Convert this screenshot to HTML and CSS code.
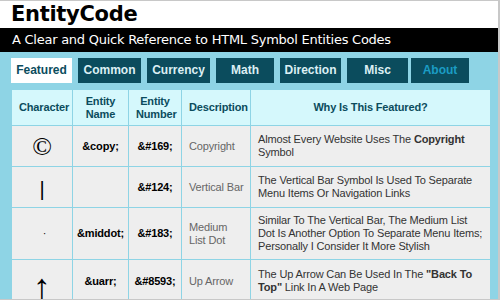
FILE: index.html
```html
<!DOCTYPE html>
<html lang="en">

<head>
    <meta charset="UTF-8">
    <title>EntityCode</title>
    <link rel="stylesheet" href="styles.css">
</head>

<body>

    <div id="page">
        <div id="masthead">
            <h1>EntityCode</h1>
        </div>
        <div id="tagline">A Clear and Quick Reference to HTML Symbol Entities Codes</div>

        <div id="main">
            <ul class="tabs">
                <li class="tab active">Featured</li>
                <li class="tab wide">Common</li>
                <li class="tab wide">Currency</li>
                <li class="tab narrow">Math</li>
                <li class="tab">Direction</li>
                <li class="tab">Misc</li>
                <li class="tab narrow about">About</li>
            </ul>

            <table class="entities">
                <tr>
                    <th class="col_char">Character</th>
                    <th class="col_name">Entity Name</th>
                    <th class="col_num">Entity Number</th>
                    <th class="col_desc">Description</th>
                    <th>Why Is This Featured?</th>
                </tr>
                <tr class="row_short">
                    <td class="glyph copy">&copy;</td>
                    <td class="code">&amp;copy;</td>
                    <td class="code">&amp;#169;</td>
                    <td class="desc">Copyright</td>
                    <td class="why">Almost Every Website Uses The <b>Copyright</b> Symbol</td>
                </tr>
                <tr class="row_short">
                    <td class="glyph bar">|</td>
                    <td class="code"></td>
                    <td class="code">&amp;#124;</td>
                    <td class="desc">Vertical Bar</td>
                    <td class="why">The Vertical Bar Symbol Is Used To Separate Menu Items Or Navigation Links</td>
                </tr>
                <tr>
                    <td class="glyph dot">&middot;</td>
                    <td class="code">&amp;middot;</td>
                    <td class="code">&amp;#183;</td>
                    <td class="desc">Medium<br>List Dot</td>
                    <td class="why">Similar To The Vertical Bar, The Medium List Dot Is Another Option To Separate Menu Items; Personally I Consider It More Stylish</td>
                </tr>
                <tr class="row_short">
                    <td class="glyph arrow">&uarr;</td>
                    <td class="code">&amp;uarr;</td>
                    <td class="code">&amp;#8593;</td>
                    <td class="desc">Up Arrow</td>
                    <td class="why">The Up Arrow Can Be Used In The <b>"Back To Top"</b> Link In A Web Page</td>
                </tr>
            </table>
        </div>
    </div>

</body>

</html>
```

FILE: styles.css
```css
*{
    box-sizing: border-box;
}

body{
    margin: 0;
    background-color: white;
}

#page{
    width: 500px;
    height: 300px;
    overflow: hidden;
    border-top: 1px solid #c8c8c8;
    border-right: 2px solid #c8c8c8;
    border-bottom: 1px solid #c8c8c8;
}

#masthead{
    height: 27px;
    padding-left: 11px;
}

h1{
    margin: 0;
    font-family: "DejaVu Sans", sans-serif;
    font-size: 21px;
    line-height: 26px;
    font-weight: bold;
    letter-spacing: -0.3px;
    color: black;
}

#tagline{
    height: 24px;
    background-color: black;
    color: white;
    font-family: "DejaVu Sans", sans-serif;
    font-size: 13px;
    line-height: 24px;
    letter-spacing: -0.25px;
    padding-left: 12px;
}

#main{
    background-color: #8ed4e5;
    height: 250px;
    padding: 6px 6px 0 11px;
}

.tabs{
    display: flex;
    gap: 6px;
    margin: 0;
    padding: 0;
    list-style: none;
}

.tab{
    width: 61px;
    height: 25px;
    background-color: #0b4c5d;
    color: #dcefF4;
    font-family: "Liberation Sans", Arial, sans-serif;
    font-size: 12px;
    font-weight: bold;
    line-height: 25px;
    text-align: center;
}

.tab.wide{
    width: 63px;
}

.tab.narrow{
    width: 58px;
}

.tab.active{
    background-color: white;
    color: #0b4c5d;
}

.tab.about{
    color: #1b9cc4;
    margin-left: -3px;
}

.entities{
    margin-top: 6px;
    width: 480px;
    border-collapse: collapse;
    table-layout: fixed;
    font-family: "Liberation Sans", Arial, sans-serif;
    font-size: 11px;
    letter-spacing: -0.15px;
}

.entities th, .entities td{
    border: 1px solid #8ed4e5;
    padding: 0 7px;
    vertical-align: middle;
}

.entities th{
    height: 36px;
    background-color: #d5f8fc;
    color: #0b4c5d;
    font-weight: bold;
    line-height: 13px;
    text-align: center;
}

.col_char{
    width: 61px;
}

.col_name{
    width: 56px;
}

.col_num{
    width: 53px;
}

.col_desc{
    width: 69px;
}

.entities td{
    background-color: #eeeeee;
    line-height: 13px;
    height: 52px;
}

.entities tr.row_short td{
    height: 41px;
}

.glyph{
    text-align: center;
    font-family: "Liberation Serif", serif;
    color: black;
}

.glyph.copy{
    font-size: 26px;
}

.glyph.bar{
    font-family: "Liberation Sans", sans-serif;
    font-size: 20px;
    padding-top: 4px;
}

.glyph.dot{
    padding-left: 12px;
}

.glyph.arrow{
    font-size: 36px;
    padding-top: 12px;
    line-height: 30px;
}

.code{
    text-align: center;
    font-weight: bold;
    color: black;
    padding: 0 2px !important;
}

.desc{
    color: #666666;
    padding-right: 3px !important;
}

.why{
    color: #333333;
}
```
